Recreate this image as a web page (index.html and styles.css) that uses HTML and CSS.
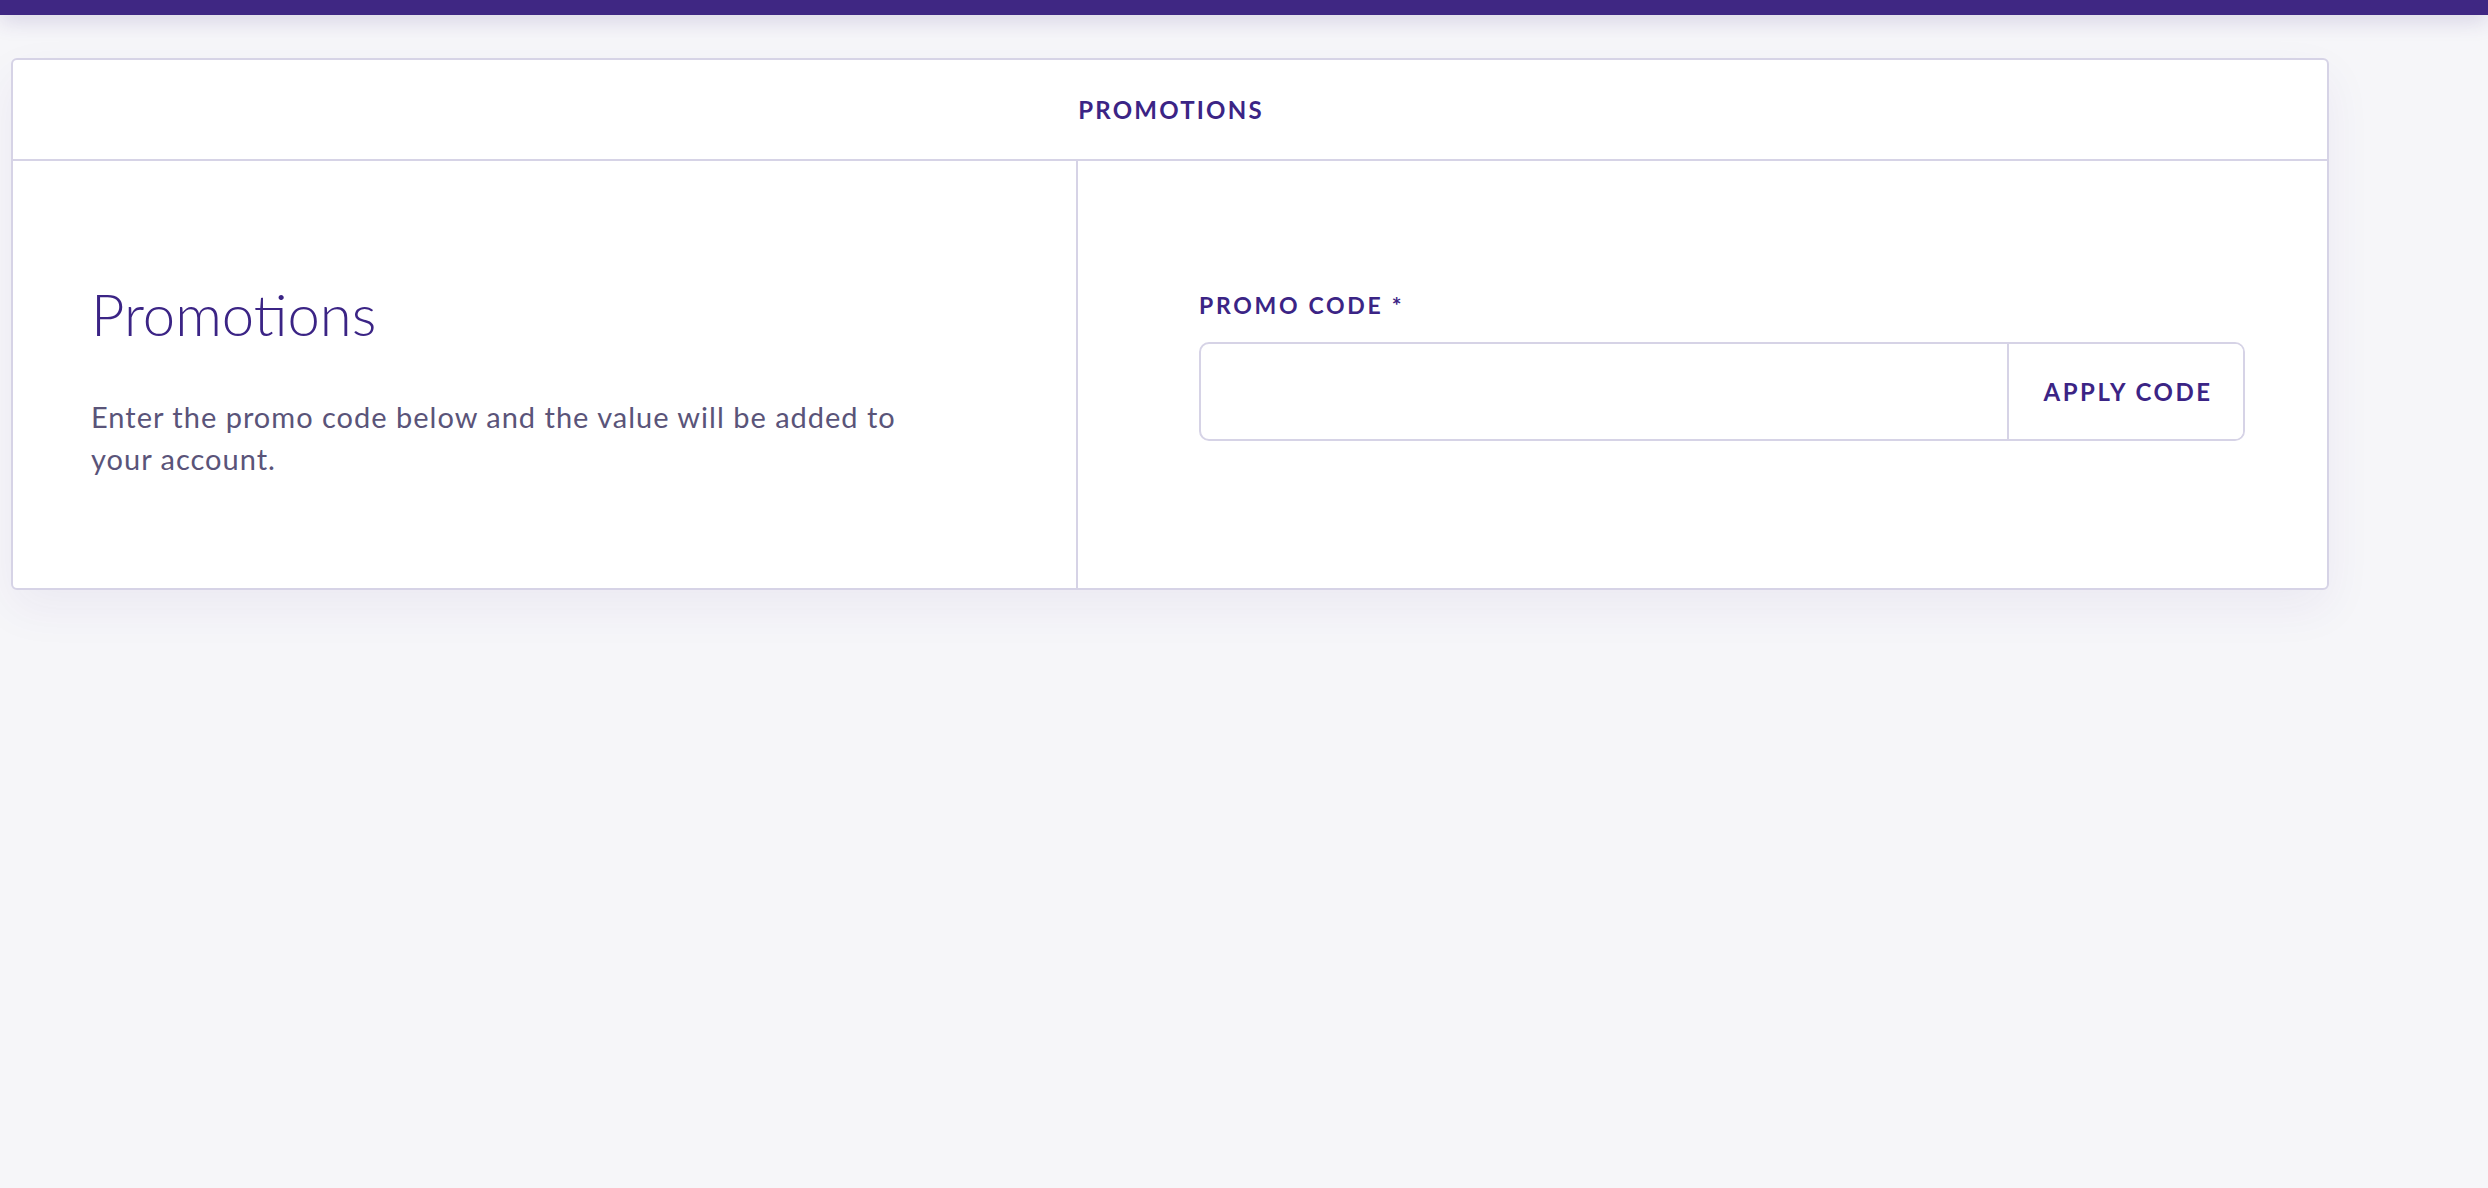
FILE: index.html
```html
<!DOCTYPE html>
<html lang="en">
<head>
<meta charset="utf-8">
<title>Promotions</title>
<link rel="stylesheet" href="styles.css">
</head>
<body>
<div class="topbar"></div>
<main class="page">
  <section class="card">
    <header class="card-header">PROMOTIONS</header>
    <div class="card-body">
      <div class="col col-info">
        <h1 class="title">Promotions</h1>
        <p class="desc">Enter the promo code below and the value will be added to your account.</p>
      </div>
      <div class="col col-form">
        <label class="label" for="promo">PROMO CODE *</label>
        <div class="field">
          <input id="promo" class="field-input" type="text">
          <button class="field-btn" type="button">APPLY CODE</button>
        </div>
      </div>
    </div>
  </section>
</main>
</body>
</html>
```

FILE: styles.css
```css
* { box-sizing: border-box; }
html, body { margin: 0; padding: 0; }
body {
  background: #f6f6f9;
  font-family: Lato, "Noto Sans", "Liberation Sans", sans-serif;
  color: #3b2485;
  min-height: 1188px;
}
.topbar {
  height: 15px;
  background: #3f2783;
  box-shadow: 0 4px 22px rgba(63, 39, 131, 0.22);
  position: relative;
  z-index: 1;
}
.page {
  padding: 43px 0 0 11px;
}
.card {
  width: 2318px;
  background: #fff;
  border: 2px solid #d6d3e6;
  border-radius: 6px;
  box-shadow: 0 18px 48px rgba(63, 39, 131, 0.06);
}
.card-header {
  height: 101px;
  border-bottom: 2px solid #d6d3e6;
  display: flex;
  align-items: center;
  justify-content: center;
  font-size: 24px;
  font-weight: 700;
  letter-spacing: 2.2px;
  color: #3b2485;
  padding-left: 2px;
}
.card-body {
  display: grid;
  grid-template-columns: 1065px 1fr;
  min-height: 427px;
}
.col-info {
  border-right: 2px solid #d6d3e6;
  padding: 118px 80px 0 78px;
}
.title {
  margin: 0;
  font-size: 58px;
  font-weight: 300;
  line-height: 1.2;
  color: #3b2485;
}
.desc {
  margin: 47px 0 0 0;
  max-width: 860px;
  font-size: 29px;
  line-height: 42px;
  color: #5a5479;
  letter-spacing: 1px;
}
.col-form {
  padding: 130px 82px 0 121px;
  display: flex;
  flex-direction: column;
}
.label {
  font-size: 23px;
  font-weight: 700;
  letter-spacing: 2.7px;
  line-height: 28px;
  color: #3b2485;
}
.field {
  margin-top: 23px;
  height: 99px;
  display: flex;
  border: 2px solid #d6d3e6;
  border-radius: 10px;
  overflow: hidden;
  background: #fff;
}
.field-input {
  flex: 1;
  border: 0;
  outline: none;
  padding: 0 24px;
  font: inherit;
  font-size: 28px;
  color: #3b2485;
  background: transparent;
}
.field-btn {
  width: 236px;
  border: 0;
  border-left: 2px solid #d6d3e6;
  background: #fff;
  font-family: inherit;
  font-size: 24px;
  font-weight: 700;
  letter-spacing: 2.5px;
  color: #3b2485;
  padding: 0 0 0 4px;
  cursor: pointer;
}
```
